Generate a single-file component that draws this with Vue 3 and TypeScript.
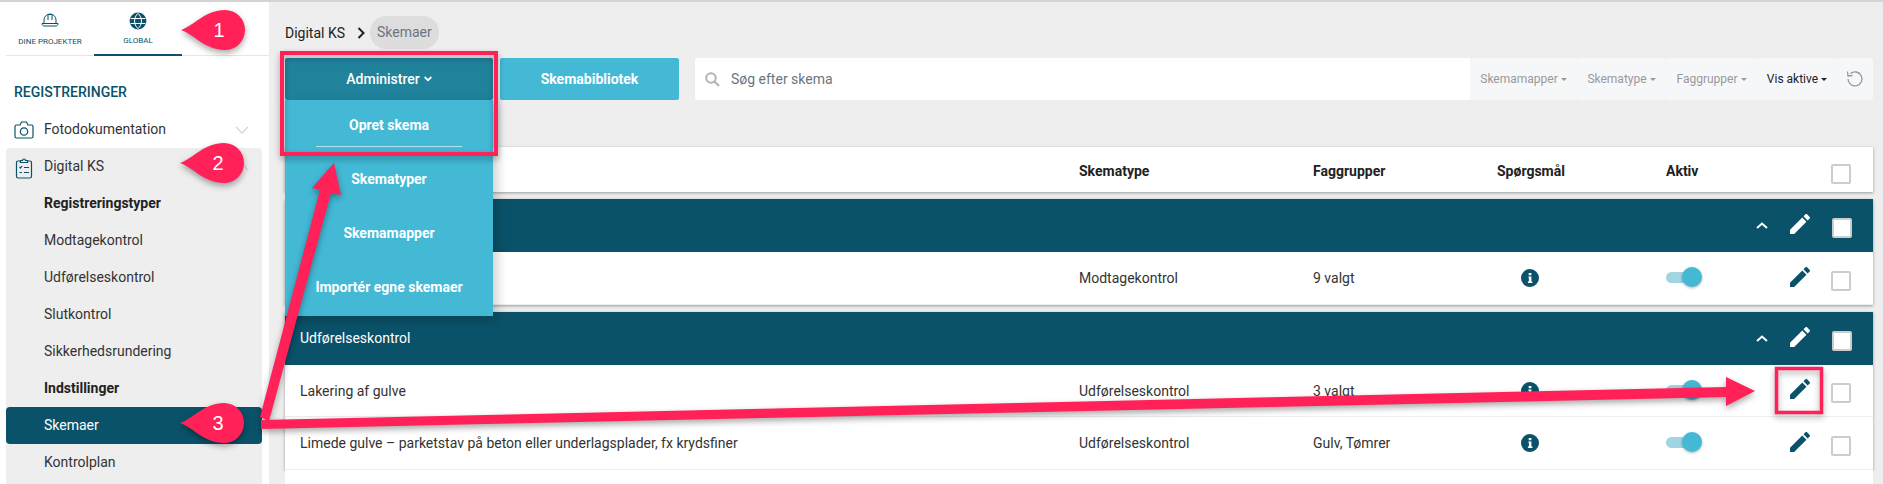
<script setup lang="ts">
type NavItem = { label: string; kind?: 'heading' | 'active' }
type Row = { name: string; type: string; groups: string }
type Group = { title: string; rows: Row[] }

const subItems: NavItem[] = [
  { label: 'Registreringstyper', kind: 'heading' },
  { label: 'Modtagekontrol' },
  { label: 'Udførelseskontrol' },
  { label: 'Slutkontrol' },
  { label: 'Sikkerhedsrundering' },
  { label: 'Indstillinger', kind: 'heading' },
  { label: 'Skemaer', kind: 'active' },
  { label: 'Kontrolplan' },
]

const filters = [
  { label: 'Skemamapper', width: 107 },
  { label: 'Skematype', width: 89 },
  { label: 'Faggrupper', width: 91 },
  { label: 'Vis aktive', width: 80, on: true },
]

const menuItems = ['Skematyper', 'Skemamapper', 'Importér egne skemaer']

const groups: Group[] = [
  {
    title: '',
    rows: [{ name: '', type: 'Modtagekontrol', groups: '9 valgt' }],
  },
  {
    title: 'Udførelseskontrol',
    rows: [
      { name: 'Lakering af gulve', type: 'Udførelseskontrol', groups: '3 valgt' },
      {
        name: 'Limede gulve – parketstav på beton eller underlagsplader, fx krydsfiner',
        type: 'Udførelseskontrol',
        groups: 'Gulv, Tømrer',
      },
    ],
  },
]

const badges = [
  { n: 1, x: 181, y: 30 },
  { n: 2, x: 180, y: 163 },
  { n: 3, x: 180, y: 423 },
]

const pencil = 'M3 17.25V21h3.75L17.81 9.94l-3.75-3.75L3 17.25zM20.71 7.04c.39-.39.39-1.02 0-1.41l-2.34-2.34c-.39-.39-1.02-.39-1.41 0l-1.83 1.83 3.75 3.75 1.83-1.83z'
</script>

<template>
  <div class="page">
    <aside class="sidebar">
      <div class="tabs">
        <div class="tab">
          <svg width="18" height="16" viewBox="0 0 18 16" fill="none" stroke="#0a5269" stroke-width="1">
            <path d="M3 11V8a6 6 0 0 1 12 0v3M7 2.500V8M11 2.500V8M7 2.500h4" />
            <path d="M1 11.500h16c0 1.500-1 2.500-2 2.500H3c-1 0-2-1-2-2.500z" />
          </svg>
          <span>DINE PROJEKTER</span>
        </div>
        <div class="tab active">
          <svg width="18" height="18" viewBox="0 0 18 18" fill="none" stroke="#0a5269" stroke-width="1.600">
            <circle cx="9" cy="9" r="7.600" fill="#0a5269" />
            <path stroke="#fff" stroke-width="1" d="M1.500 6.500h15M1.500 11.500h15M9 1.400c-4.600 4-4.600 11.200 0 15.200M9 1.400c4.600 4 4.600 11.200 0 15.200" />
          </svg>
          <span>GLOBAL</span>
        </div>
      </div>

      <h2 class="section-title">REGISTRERINGER</h2>

      <div class="nav-row">
        <svg class="nav-icon" width="20" height="18" viewBox="0 0 20 18" fill="none" stroke="#0a5269" stroke-width="1.200">
          <path d="M1 5.500a1.500 1.500 0 0 1 1.500-1.500H6l1.500-3h5L14 4h3.500A1.500 1.500 0 0 1 19 5.500v10a1.500 1.500 0 0 1-1.500 1.500h-15A1.500 1.500 0 0 1 1 15.500z" />
          <circle cx="10" cy="10.500" r="3.700" />
        </svg>
        <span>Fotodokumentation</span>
        <svg class="chev" width="14" height="8" viewBox="0 0 14 8" fill="none" stroke="#d5d5d5" stroke-width="1.300">
          <path d="M1 1l6 6 6-6" />
        </svg>
      </div>

      <div class="nav-block">
        <div class="nav-row">
          <svg class="nav-icon" width="20" height="21" viewBox="0 0 20 21" fill="none" stroke="#0a5269" stroke-width="1.200">
            <path d="M6.500 3H4a1.500 1.500 0 0 0-1.500 1.500v14A1.500 1.500 0 0 0 4 20h12a1.500 1.500 0 0 0 1.500-1.500v-14A1.500 1.500 0 0 0 16 3h-2.500" />
            <path d="M6.500 4.500V2.500h2a1.500 1.500 0 0 1 3 0h2v2zM5.500 9l1 1 1.500-2M10 9.500h5M5.500 14.500h2.500M10 14.500h5" />
          </svg>
          <span>Digital KS</span>
          <svg class="chev" width="14" height="8" viewBox="0 0 14 8" fill="none" stroke="#d5d5d5" stroke-width="1.300">
            <path d="M1 7l6-6 6 6" />
          </svg>
        </div>
        <div
          v-for="item in subItems"
          :key="item.label"
          class="sub-row"
          :class="item.kind"
        >
          {{ item.label }}
        </div>
      </div>
    </aside>

    <main class="content">
      <nav class="crumbs">
        <span>Digital KS</span>
        <svg class="crumb-sep" width="8" height="12" viewBox="0 0 8 12" fill="none" stroke="#222" stroke-width="2">
          <path d="M1.500 1l5 5-5 5" />
        </svg>
        <span class="chip">Skemaer</span>
      </nav>

      <div class="toolbar">
        <div class="admin">
          <button class="btn btn-dark">
            Administrer
            <svg width="8" height="6" viewBox="0 0 8 6" fill="none" stroke="#fff" stroke-width="1.800">
              <path d="M.7 1l3.300 3.300L7.300 1" />
            </svg>
          </button>
          <div class="menu">
            <div class="menu-item first"><span>Opret skema</span></div>
            <div v-for="item in menuItems" :key="item" class="menu-item">{{ item }}</div>
          </div>
        </div>
        <button class="btn btn-lib">Skemabibliotek</button>
        <div class="search">
          <svg width="15" height="15" viewBox="0 0 15 15" fill="none" stroke="#b3b3b3" stroke-width="2">
            <circle cx="6" cy="6" r="4.800" />
            <path d="M9.500 9.500l4.500 4.500" />
          </svg>
          <span>Søg efter skema</span>
        </div>
        <div class="filters">
          <div
            v-for="f in filters"
            :key="f.label"
            class="filter"
            :class="{ on: f.on }"
            :style="{ width: f.width + 'px' }"
          >
            {{ f.label }}<i class="caret" />
          </div>
          <div class="filter reset">
            <svg width="18" height="18" viewBox="0 0 18 18" fill="none" stroke="#999" stroke-width="1.300">
              <path d="M4.500 3.500A7 7 0 1 1 2 9M1.500 1.500l.5 4.500 4.500-.5" />
            </svg>
          </div>
        </div>
      </div>

      <section class="table">
        <div class="grid head">
          <span />
          <span>Skematype</span>
          <span>Faggrupper</span>
          <span>Spørgsmål</span>
          <span>Aktiv</span>
          <div class="actions"><i class="check" /></div>
        </div>

        <div v-for="group in groups" :key="group.title" class="group">
          <div class="grid group-head">
            <span>{{ group.title }}</span>
            <div class="actions dark">
              <svg width="12" height="7" viewBox="0 0 12 7" fill="none" stroke="#fff" stroke-width="2">
                <path d="M1 6l5-4.500L11 6" />
              </svg>
              <svg class="pencil" width="20" height="20" viewBox="3 3 18 18" fill="#fff"><path :d="pencil" /></svg>
              <i class="check" />
            </div>
          </div>
          <div v-for="row in group.rows" :key="row.type + row.groups" class="grid row">
            <span>{{ row.name }}</span>
            <span>{{ row.type }}</span>
            <span>{{ row.groups }}</span>
            <span class="info-cell">
              <svg width="18" height="18" viewBox="0 0 18 18">
                <circle cx="9" cy="9" r="9" fill="#0a5269" />
                <path fill="#fff" d="M7.400 7.400h3v5.200h1v1.400H6.900v-1.400h1V8.800h-.5zM7.700 4h2.700v2.300H7.700z" />
              </svg>
            </span>
            <span class="toggle"><i /></span>
            <div class="actions">
              <svg class="pencil" width="20" height="20" viewBox="3 3 18 18" fill="#0a5269"><path :d="pencil" /></svg>
              <i class="check" />
            </div>
          </div>
        </div>
        <div class="rest" />
      </section>
    </main>

    <svg class="annotations" width="1883" height="484" viewBox="0 0 1883 484">
      <g class="shadowed" fill="#ff2158">
        <rect x="282" y="53" width="214" height="101" fill="none" stroke="#ff2158" stroke-width="4" />
        <rect x="1776.500" y="368.500" width="45" height="44" fill="none" stroke="#ff2158" stroke-width="3.500" />
        <path d="M260 417L320 190L312 188L334 163L341 195L331 193L269 421z" />
        <path d="M261 420L1726 387V377L1755 391L1726 406V397L261 429z" />
      </g>
      <g v-for="b in badges" :key="b.n" :transform="`translate(${b.x} ${b.y})`">
        <path
          class="shadowed"
          fill="#ff2158"
          d="M0 0C14-5 24-20 44-20A20 20 0 0 1 44 20C24 20 14 5 0 0z"
        />
        <text class="badge-num" x="38" y="7" text-anchor="middle">{{ b.n }}</text>
      </g>
    </svg>
  </div>
</template>

<style scoped>
.page {
  position: relative;
  display: flex;
  width: 1883px;
  height: 484px;
  overflow: hidden;
  box-sizing: border-box;
  border-top: 2px solid #d4d4d4;
  background: #eee;
  font-family: Roboto, "Liberation Sans", sans-serif;
  font-size: 14px;
  color: #333;
}

.sidebar {
  width: 269px;
  flex-shrink: 0;
  background: #fff;
  box-sizing: border-box;
  padding-left: 6px;
  padding-right: 7px;
}

.tabs {
  display: flex;
  height: 54px;
  margin-right: -7px;
  border-bottom: 1px solid #e6e6e6;
  box-sizing: border-box;
}

.tab {
  width: 88px;
  height: 54px;
  box-sizing: border-box;
  padding-top: 10px;
  display: flex;
  flex-direction: column;
  align-items: center;
  justify-content: space-between;
  padding-bottom: 10px;
  font-size: 8px;
  color: #0a5269;
}

.tab.active {
  border-bottom: 2px solid #0a5269;
  padding-bottom: 9px;
}

.section-title {
  margin: 28px 0 0 8px;
  height: 17px;
  line-height: 17px;
  font-size: 14px;
  font-weight: 500;
  color: #0a5269;
}

.nav-row {
  position: relative;
  display: flex;
  align-items: center;
  height: 37px;
  box-sizing: border-box;
  padding: 0 0 2px 38px;
}

.sidebar > .nav-row {
  margin-top: 10px;
}

.nav-icon {
  position: absolute;
  left: 8px;
  top: 10px;
}

.chev {
  position: absolute;
  left: 229px;
  top: 15px;
}

.nav-block {
  background: #eee;
  border-radius: 4px;
  height: 340px;
}

.sub-row {
  display: flex;
  align-items: center;
  height: 37px;
  box-sizing: border-box;
  padding: 0 0 2px 38px;
  border-radius: 4px;
}

.sub-row.heading {
  font-weight: 700;
  color: #222;
}

.sub-row.active {
  background: #0a5269;
  color: #fff;
}

.content {
  flex: 1;
  min-width: 0;
  padding: 14px 10px 0 16px;
}

.crumbs {
  display: flex;
  align-items: center;
  height: 33px;
  color: #222;
}

.crumb-sep {
  margin: 0 5px 0 12px;
}

.chip {
  padding: 0 7px;
  height: 33px;
  line-height: 33px;
  border-radius: 16px;
  background: #ddd;
  color: #6c757d;
}

.toolbar {
  display: flex;
  align-items: stretch;
  height: 42px;
  margin-top: 9px;
}

.admin {
  position: relative;
  width: 208px;
  z-index: 2;
}

.btn {
  display: flex;
  align-items: center;
  justify-content: center;
  gap: 4px;
  height: 42px;
  border: 0;
  border-radius: 2px;
  color: #fff;
  font: 500 14px Roboto, "Liberation Sans", sans-serif;
  padding: 0;
}

.btn-dark {
  width: 208px;
  background: #21829c;
}

.btn-lib {
  width: 179px;
  margin-left: 7px;
  background: #43b9d6;
  font-weight: 700;
}

.menu {
  position: absolute;
  top: 42px;
  left: 0;
  width: 208px;
  height: 216px;
  background: #43b9d6;
  color: #fff;
  font-weight: 700;
  box-shadow: 4px 4px 10px rgba(0, 0, 0, .2);
}

.menu-item {
  display: flex;
  align-items: center;
  justify-content: center;
  height: 54px;
}

.menu-item.first {
  height: 52px;
  align-items: flex-start;
}

.menu-item.first span {
  width: 146px;
  text-align: center;
  line-height: 17px;
  padding: 17px 0 12px;
  border-bottom: 1px solid #b4e3ef;
}

.search {
  flex: 1;
  display: flex;
  align-items: center;
  gap: 11px;
  margin-left: 16px;
  padding-left: 10px;
  background: #fff;
  border-radius: 2px 0 0 2px;
  color: #6c757d;
}

.filters {
  display: flex;
}

.filter {
  display: flex;
  align-items: center;
  justify-content: center;
  background: #f6f7f9;
  border-radius: 3px;
  font-size: 12px;
  color: #999;
}

.filter.on {
  color: #222;
}

.filter.reset {
  width: 36px;
}

.caret {
  margin-left: 3px;
  border-top: 3px solid currentColor;
  border-left: 3px solid transparent;
  border-right: 3px solid transparent;
}

.table {
  margin-top: 47px;
}

.grid {
  display: grid;
  grid-template-columns: 779px 234px 184px 169px 90px 1fr;
  align-items: center;
  padding-left: 15px;
  background: #fff;
}

.head {
  height: 45px;
  box-sizing: border-box;
  padding-top: 2px;
  font-weight: 700;
  color: #222;
  box-shadow: 0 1px 3px rgba(0, 0, 0, .35);
}

.group {
  margin-top: 7px;
  box-shadow: 0 1px 3px rgba(0, 0, 0, .35);
}

.group-head {
  height: 53px;
  box-sizing: border-box;
  padding-bottom: 1px;
  background: #0a5269;
  color: #fff;
}

.row {
  height: 53px;
  box-sizing: border-box;
  border-bottom: 1px solid #eee;
}

.row:has(+ .row) {
  height: 52px;
}

.info-cell {
  display: flex;
  padding-left: 24px;
}

.toggle {
  position: relative;
  display: block;
  width: 34px;
  height: 11px;
  margin-top: -1px;
  border-radius: 6px;
  background: #a1d5e2;
}

.toggle i {
  position: absolute;
  left: 16px;
  top: -5px;
  width: 20px;
  height: 20px;
  border-radius: 50%;
  background: #43b9d6;
  box-shadow: 0 1px 3px rgba(0, 0, 0, .3);
}

.actions {
  display: flex;
  align-items: center;
  justify-content: flex-end;
  gap: 21px;
  padding-right: 22px;
  grid-column: 6;
}

.actions.dark {
  padding-right: 21px;
  gap: 22px;
}

.pencil {
  margin-top: -3px;
}

.check {
  display: block;
  width: 20px;
  height: 20px;
  margin-top: 5px;
  box-sizing: border-box;
  border: 2px solid #ccc;
  border-radius: 2px;
  background: #fff;
}

.head .check {
  margin-top: 7px;
}

.rest {
  position: relative;
  height: 14px;
  background: #fff;
}

.annotations {
  position: absolute;
  left: 0;
  top: -2px;
  pointer-events: none;
  z-index: 5;
}

.shadowed {
  filter: drop-shadow(0 3px 3px rgba(0, 0, 0, .35));
}

.badge-num {
  font: 20px "Liberation Sans", sans-serif;
  fill: #fff;
}
</style>
